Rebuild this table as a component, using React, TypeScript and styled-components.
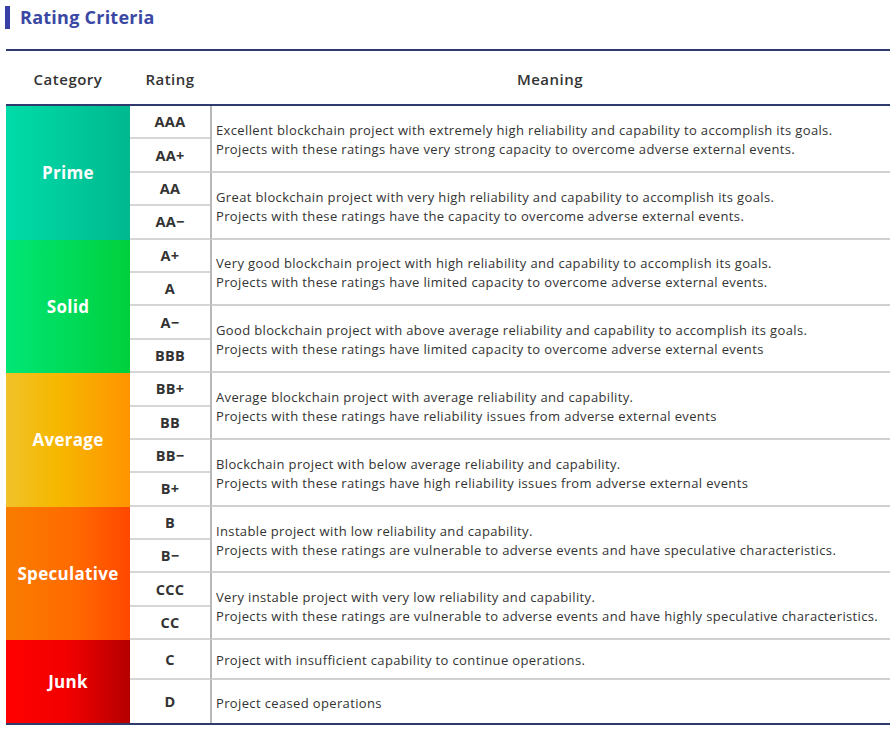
import React from "react";
import styled, { createGlobalStyle } from "styled-components";

const Global = createGlobalStyle`
  html, body { margin: 0; padding: 0; background: #ffffff; }
  body { font-family: "Open Sans", "Liberation Sans", sans-serif; color: #333333; }
`;

const Page = styled.div`
  padding: 5px 6px 0 6px;
  width: 884px;
`;

const TitleRow = styled.div`
  display: flex;
  align-items: center;
  height: 24px;
  margin-left: -1px;
`;

const TitleBar = styled.div`
  width: 5px;
  height: 23px;
  background: #3840a8;
  margin-right: 10px;
`;

const Title = styled.h2`
  margin: 0;
  font-family: "Open Sans", sans-serif;
  font-size: 18px;
  font-weight: 700;
  color: #3a48a4;
  letter-spacing: 0.25px;
`;

const Table = styled.div`
  margin-top: 20px;
  border-top: 2px solid #2e3b6c;
  border-bottom: 2px solid #2e3b6c;
`;

const HeaderRow = styled.div`
  display: grid;
  grid-template-columns: 124px 80px 1fr;
  height: 53px;
  border-bottom: 2px solid #2e3b6c;
  align-items: center;
`;

const HeadCell = styled.div`
  text-align: center;
  font-size: 15px;
  font-weight: 600;
  letter-spacing: 0.5px;
  color: #333333;
  padding-top: 2px;
`;

const Body = styled.div`
  display: grid;
  grid-template-columns: 124px 80px 1fr;
  grid-template-rows: repeat(16, 33.4px) 40px 43px;
  grid-auto-flow: row dense;
`;

const Category = styled.div<{ $bg: string; $span: number }>`
  grid-column: 1;
  grid-row: span ${(p) => p.$span};
  background: ${(p) => p.$bg};
  display: flex;
  align-items: center;
  justify-content: center;
  color: #ffffff;
  font-size: 17px;
  font-weight: 700;
  letter-spacing: 0.3px;
`;

const RatingCell = styled.div<{ $last?: boolean }>`
  grid-column: 2;
  display: flex;
  align-items: center;
  justify-content: center;
  font-size: 14.5px;
  font-weight: 700;
  letter-spacing: 0.3px;
  color: #333333;
  border-bottom: ${(p) => (p.$last ? "none" : "2px solid #d6d6d6")};
  box-sizing: border-box;
`;

const MeaningCell = styled.div<{ $span: number; $last?: boolean }>`
  grid-column: 3;
  grid-row: span ${(p) => p.$span};
  display: flex;
  flex-direction: column;
  justify-content: center;
  padding: 3px 0 0 4px;
  border-left: 2px solid #b8b8b8;
  border-bottom: ${(p) => (p.$last ? "none" : "2px solid #d0d0d0")};
  box-sizing: border-box;
  font-size: 13px;
  letter-spacing: 0.36px;
  line-height: 19px;
  color: #333333;
  white-space: nowrap;
`;

type Group = {
  name: string;
  bg: string;
  items: { ratings: string[]; lines: string[] }[];
};

const groups: Group[] = [
  {
    name: "Prime",
    bg: "linear-gradient(90deg, #00dca9 0%, #00b88f 100%)",
    items: [
      {
        ratings: ["AAA", "AA+"],
        lines: [
          "Excellent blockchain project with extremely high reliability and capability to accomplish its goals.",
          "Projects with these ratings have very strong capacity to overcome adverse external events.",
        ],
      },
      {
        ratings: ["AA", "AA−"],
        lines: [
          "Great blockchain project with very high reliability and capability to accomplish its goals.",
          "Projects with these ratings have the capacity to overcome adverse external events.",
        ],
      },
    ],
  },
  {
    name: "Solid",
    bg: "linear-gradient(90deg, #00e676 0%, #00d03c 100%)",
    items: [
      {
        ratings: ["A+", "A"],
        lines: [
          "Very good blockchain project with high reliability and capability to accomplish its goals.",
          "Projects with these ratings have limited capacity to overcome adverse external events.",
        ],
      },
      {
        ratings: ["A−", "BBB"],
        lines: [
          "Good blockchain project with above average reliability and capability to accomplish its goals.",
          "Projects with these ratings have limited capacity to overcome adverse external events",
        ],
      },
    ],
  },
  {
    name: "Average",
    bg: "linear-gradient(90deg, #f0c22a 0%, #f6b800 40%, #ff9400 100%)",
    items: [
      {
        ratings: ["BB+", "BB"],
        lines: [
          "Average blockchain project with average reliability and capability.",
          "Projects with these ratings have reliability issues from adverse external events",
        ],
      },
      {
        ratings: ["BB−", "B+"],
        lines: [
          "Blockchain project with below average reliability and capability.",
          "Projects with these ratings have high reliability issues from adverse external events",
        ],
      },
    ],
  },
  {
    name: "Speculative",
    bg: "linear-gradient(90deg, #f97d00 0%, #ff6a00 55%, #ff4800 100%)",
    items: [
      {
        ratings: ["B", "B−"],
        lines: [
          "Instable project with low reliability and capability.",
          "Projects with these ratings are vulnerable to adverse events and have speculative characteristics.",
        ],
      },
      {
        ratings: ["CCC", "CC"],
        lines: [
          "Very instable project with very low reliability and capability.",
          "Projects with these ratings are vulnerable to adverse events and have highly speculative characteristics.",
        ],
      },
    ],
  },
  {
    name: "Junk",
    bg: "linear-gradient(90deg, #ff0000 0%, #f20000 50%, #b40000 100%)",
    items: [
      { ratings: ["C"], lines: ["Project with insufficient capability to continue operations."] },
      { ratings: ["D"], lines: ["Project ceased operations"] },
    ],
  },
];

export default function App() {
  const items: React.ReactNode[] = [];
  groups.forEach((g, gi) => {
    const span = g.items.reduce((n, it) => n + it.ratings.length, 0);
    items.push(
      <Category key={`c${gi}`} $bg={g.bg} $span={span}>
        {g.name}
      </Category>
    );
    g.items.forEach((it, ii) => {
      const isLastItem = gi === groups.length - 1 && ii === g.items.length - 1;
      items.push(
        <MeaningCell key={`m${gi}-${ii}`} $span={it.ratings.length} $last={isLastItem}>
          {it.lines.map((l, li) => (
            <div key={li}>{l}</div>
          ))}
        </MeaningCell>
      );
      it.ratings.forEach((r, ri) => {
        const isLast = isLastItem && ri === it.ratings.length - 1;
        items.push(
          <RatingCell key={`r${gi}-${ii}-${ri}`} $last={isLast}>
            {r}
          </RatingCell>
        );
      });
    });
  });

  return (
    <>
      <Global />
      <Page>
        <TitleRow>
          <TitleBar />
          <Title>Rating Criteria</Title>
        </TitleRow>
        <Table>
          <HeaderRow>
            <HeadCell>Category</HeadCell>
            <HeadCell>Rating</HeadCell>
            <HeadCell>Meaning</HeadCell>
          </HeaderRow>
          <Body>{items}</Body>
        </Table>
      </Page>
    </>
  );
}
